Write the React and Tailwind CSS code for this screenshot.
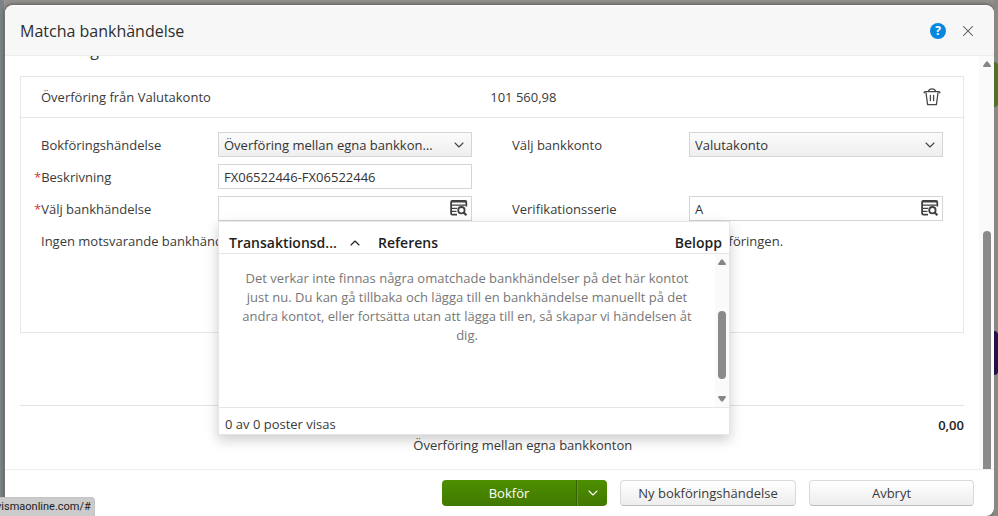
import { ChevronDown, ChevronUp, X } from 'lucide-react';

const fieldClass = 'block h-[25px] w-full border border-[#d5d5d5] bg-white pl-[5px] pr-8 text-[13px] text-[#333] outline-none';

function TrashIcon() {
    return (
        <svg width="18" height="18" viewBox="0 0 18 18" fill="none" stroke="#484848" strokeWidth="1.3" strokeLinecap="round" strokeLinejoin="round" aria-hidden="true">
            <path d="M1 4.8 1.8 3.6H16.2L17 4.8M5.4 3.4Q6 0.9 9 0.9T12.6 3.4M3 5 4.6 16.6H13.4L15 5" />
            <path d="M7.4 7.5V12.5M10.6 7.5V12.5" />
        </svg>
    );
}

function LookupIcon() {
    return (
        <svg width="18" height="16" viewBox="0 0 18 16" fill="none" stroke="#404040" aria-hidden="true">
            <path d="M7 14.6H2.4Q1.1 14.6 1.1 13.3V2.2Q1.1 1 2.4 1H15Q16.3 1 16.3 2.2V6.5" strokeWidth="1.8" />
            <path d="M1 1.6H16.4" strokeWidth="1.6" />
            <path d="M2 5.2H15.5M2 8.4H7M2 11.4H6.5" strokeWidth="1.3" />
            <circle cx="11.4" cy="10.2" r="3.2" strokeWidth="1.8" />
            <path d="M13.7 12.5 16.4 15.2" strokeWidth="2.2" />
        </svg>
    );
}

function Arrow({ down }) {
    return (
        <svg width="8" height="6" viewBox="0 0 8 6" fill="#858585" aria-hidden="true">
            <path d={down ? 'M0.5 0H7.5L8 1 4.8 5.5H3.2L0 1Z' : 'M0.5 6H7.5L8 5 4.8 0.5H3.2L0 5Z'} />
        </svg>
    );
}

function FormRow({ id, label, required, children }) {
    return (
        <div className="flex h-[25px] items-center">
            <label htmlFor={id} className="w-[177px] shrink-0">
                {required && <span className="-ml-[7px] text-[#d03a3a]">*</span>}
                {label}
            </label>
            <div className="relative min-w-0 flex-1">{children}</div>
        </div>
    );
}

function Select({ id, value }) {
    return (
        <>
            <select id={id} className="block h-[25px] w-full appearance-none truncate border border-[#d5d5d5] bg-linear-to-b from-[#fbfbfb] to-[#efefef] pr-[34px] pl-[5px] text-[13px] text-[#333] outline-none">
                <option>{value}</option>
            </select>
            <ChevronDown size={16} strokeWidth={1.6} className="pointer-events-none absolute top-[5px] right-[5px] text-[#444]" />
        </>
    );
}

function LookupField({ id, value }) {
    return (
        <>
            <input id={id} type="text" defaultValue={value} className={fieldClass} />
            <button type="button" aria-label="Sök" className="absolute top-1 right-1">
                <LookupIcon />
            </button>
        </>
    );
}

function TransactionPopup() {
    return (
        <div className="absolute top-full left-0 z-10 w-[512px] border border-[#e6e6e6] bg-white shadow-[0_5px_12px_rgba(0,0,0,0.2)]">
            <table className="w-full table-fixed">
                <thead>
                    <tr className="h-[31px] border-b border-[#e6e6e6] text-left text-sm text-[#1e1e1e]">
                        <th className="w-[149px] pt-[11px] pl-[10px] font-semibold">
                            <span className="flex items-center gap-[10px]">
                                Transaktionsd...
                                <ChevronUp size={16} strokeWidth={1.6} />
                            </span>
                        </th>
                        <th className="pt-[11px] pl-[10px] font-semibold">Referens</th>
                        <th className="w-24 pt-[11px] pr-[7px] text-right font-semibold">Belopp</th>
                    </tr>
                </thead>
                <tbody>
                    <tr>
                        <td colSpan={3}>
                            <div className="flex h-[153px]">
                                <p className="flex-1 px-4 pt-[15px] text-center leading-[19px] text-[#777]">
                                    Det verkar inte finnas några omatchade bankhändelser på det här kontot just nu. Du kan gå tillbaka och lägga till en bankhändelse manuellt på det andra kontot, eller fortsätta utan att lägga till en, så skapar vi händelsen åt dig.
                                </p>
                                <div className="flex w-[14px] flex-col items-center bg-[#fafafa] py-[5px]">
                                    <Arrow />
                                    <div className="mt-[46px] mb-auto h-[68px] w-2 rounded-full bg-[#8a8a8a]" />
                                    <Arrow down />
                                </div>
                            </div>
                        </td>
                    </tr>
                </tbody>
            </table>
            <div className="flex h-[27px] items-center border-t border-[#e6e6e6] px-[6px] pt-[6px]">0 av 0 poster visas</div>
        </div>
    );
}

export default function App() {
    return (
        <div className="relative flex min-h-screen overflow-hidden bg-[#92918d] font-['Open_Sans',sans-serif] text-[13px] leading-[18px] text-[#3a3a3a]">
            <div className="w-1 shrink-0 bg-[#7b8384]" />
            <div className="w-px shrink-0 bg-[#999]" />

            <div className="mt-[5px] flex min-w-0 flex-1 flex-col overflow-hidden rounded-t-lg rounded-br-lg border-t border-white bg-white shadow-[0_0_4px_rgba(0,0,0,0.6)]">
                <header className="flex h-[50px] shrink-0 items-center border-b border-[#ededed] bg-[#f7f7f7] pr-[17px] pl-[15px]">
                    <h1 className="flex-1 text-base text-[#2e2e2e]">Matcha bankhändelse</h1>
                    <button type="button" aria-label="Hjälp" className="mr-[13px] flex size-4 items-center justify-center rounded-full bg-[#0488de] text-xs font-bold text-white">?</button>
                    <button type="button" aria-label="Stäng"><X size={18} strokeWidth={1.4} className="text-[#555]" /></button>
                </header>

                <div className="flex flex-1">
                    <main className="min-w-0 flex-1 px-[15px]">
                        <div className="flex h-5 items-start overflow-hidden">
                            <h2 className="-mt-[15px] text-base leading-[18px]">Matchning</h2>
                        </div>

                        <section className="h-[257px] border border-[#e6e6e6]">
                            <div className="grid h-[41px] grid-cols-7 items-center border-b border-[#e6e6e6] px-5">
                                <span className="col-span-3">Överföring från Valutakonto</span>
                                <span className="text-right">101 560,98</span>
                                <button type="button" aria-label="Ta bort" className="col-span-3 mr-[2px] justify-self-end"><TrashIcon /></button>
                            </div>

                            <form className="px-5 pt-[14px]">
                                <div className="grid grid-cols-2 gap-10">
                                    <div className="space-y-[7px]">
                                        <FormRow id="event" label="Bokföringshändelse">
                                            <Select id="event" value="Överföring mellan egna bankkonton" />
                                        </FormRow>
                                        <FormRow id="description" label="Beskrivning" required>
                                            <input id="description" type="text" defaultValue="FX06522446-FX06522446" className={fieldClass} />
                                        </FormRow>
                                        <FormRow id="bank-event" label="Välj bankhändelse" required>
                                            <LookupField id="bank-event" value="" />
                                            <TransactionPopup />
                                        </FormRow>
                                    </div>
                                    <div className="flex flex-col justify-between">
                                        <FormRow id="account" label="Välj bankkonto">
                                            <Select id="account" value="Valutakonto" />
                                        </FormRow>
                                        <FormRow id="series" label="Verifikationsserie">
                                            <LookupField id="series" value="A" />
                                        </FormRow>
                                    </div>
                                </div>
                                <p className="mt-[11px] whitespace-nowrap">
                                    Ingen motsvarande bankhändelse hittades på kontot. Välj eller skapa en bankhändelse för att kunna bokföra överföringen.
                                </p>
                            </form>
                        </section>

                        <div className="mt-[72px] grid grid-cols-12 border-t border-[#e2e2e2] pt-[9px] leading-5">
                            <span className="col-span-12 text-right font-semibold text-[#222]">0,00</span>
                            <span className="col-span-7 col-start-6">Överföring mellan egna bankkonton</span>
                        </div>
                    </main>

                    <div className="flex w-[15px] shrink-0 flex-col items-center bg-[#fafafa] pt-[5px]">
                        <Arrow />
                        <div className="mt-[164px] w-2 flex-1 rounded-t-full bg-[#8a8a8a]" />
                    </div>
                </div>

                <footer className="flex h-[47px] shrink-0 items-start justify-end gap-[13px] border-t border-[#eee] pt-[10px] pr-5">
                    <div className="flex h-[26px] w-[165px] overflow-hidden rounded-[4px] bg-linear-to-b from-[#4d8f00] to-[#427800] text-white">
                        <button type="button" className="flex-1 border-r border-[#356300]">Bokför</button>
                        <button type="button" aria-label="Fler alternativ" className="flex w-[30px] items-center justify-center border-l border-[#5c9a1a]">
                            <ChevronDown size={16} strokeWidth={1.6} />
                        </button>
                    </div>
                    <button type="button" className="h-[26px] w-[176px] rounded-[4px] border border-[#d9d9d9] border-b-[#bdbdbd] bg-linear-to-b from-white to-[#ededed]">Ny bokföringshändelse</button>
                    <button type="button" className="h-[26px] w-[165px] rounded-[4px] border border-[#d9d9d9] border-b-[#bdbdbd] bg-linear-to-b from-white to-[#ededed]">Avbryt</button>
                </footer>
            </div>

            {/* Dimmed page behind the dialog */}
            <div className="flex w-1 shrink-0 flex-col bg-[#888885]">
                <div className="mt-[62px] h-[45px] rounded-r-md bg-[#526d2c]" />
                <div className="mt-56 h-11 rounded-r-md bg-[#241147]" />
            </div>

            {/* Browser link status */}
            <div className="absolute bottom-0 left-0 z-20 h-[19px] w-[95px] overflow-hidden rounded-tr border-t border-r border-[#c4c4c4] bg-[#cbcbcb]">
                <span className="-ml-1 block whitespace-nowrap font-['Roboto',sans-serif] text-[11px] text-[#222]">vismaonline.com/#</span>
            </div>
        </div>
    );
}
